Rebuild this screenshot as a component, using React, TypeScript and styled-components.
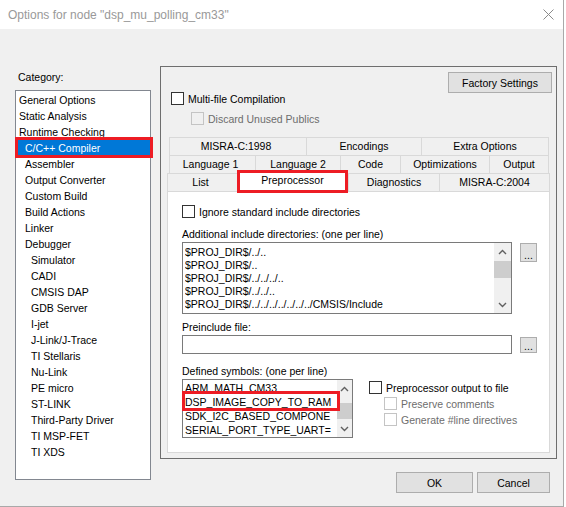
// Options dialog (IAR style)

// ___________________________________________________________________

import * as React from 'react'
import styled, { createGlobalStyle, css } from 'styled-components'

// ___________________________________________________________________

const colors = {
  face: '#f0f0f0',
  white: '#ffffff',
  text: '#000000',
  gray: '#6d6d6d',
  title: '#999999',
  frame: '#6e6e6e',
  edit: '#7a7a7a',
  list: '#828790',
  tab: '#d9d9d9',
  button: '#e1e1e1',
  buttonBorder: '#adadad',
  select: '#0078d7',
  mark: '#ed1c24',
  thumb: '#cdcdcd',
  arrow: '#606060'
}

const GlobalStyle = createGlobalStyle`
  html, body {
    margin: 0;
    padding: 0;
    background: ${colors.white};
  }
  body {
    font-family: 'Liberation Sans', Arial, sans-serif;
    font-size: 10.5px;
    color: ${colors.text};
  }
  * {
    box-sizing: border-box;
  }
`

// ___________________________________________________________________

type Category = { label: string; level: number; selected?: boolean }

const categories: Category[] = [
  { label: 'General Options', level: 0 },
  { label: 'Static Analysis', level: 0 },
  { label: 'Runtime Checking', level: 0 },
  { label: 'C/C++ Compiler', level: 1, selected: true },
  { label: 'Assembler', level: 1 },
  { label: 'Output Converter', level: 1 },
  { label: 'Custom Build', level: 1 },
  { label: 'Build Actions', level: 1 },
  { label: 'Linker', level: 1 },
  { label: 'Debugger', level: 1 },
  { label: 'Simulator', level: 2 },
  { label: 'CADI', level: 2 },
  { label: 'CMSIS DAP', level: 2 },
  { label: 'GDB Server', level: 2 },
  { label: 'I-jet', level: 2 },
  { label: 'J-Link/J-Trace', level: 2 },
  { label: 'TI Stellaris', level: 2 },
  { label: 'Nu-Link', level: 2 },
  { label: 'PE micro', level: 2 },
  { label: 'ST-LINK', level: 2 },
  { label: 'Third-Party Driver', level: 2 },
  { label: 'TI MSP-FET', level: 2 },
  { label: 'TI XDS', level: 2 }
]

type TabDef = { label: string; width: number; selected?: boolean }

const tabRows: TabDef[][] = [
  [
    { label: 'MISRA-C:1998', width: 137 },
    { label: 'Encodings', width: 115 },
    { label: 'Extra Options', width: 128 }
  ],
  [
    { label: 'Language 1', width: 86 },
    { label: 'Language 2', width: 85 },
    { label: 'Code', width: 60 },
    { label: 'Optimizations', width: 89 },
    { label: 'Output', width: 60 }
  ],
  [
    { label: 'List', width: 70 },
    { label: 'Preprocessor', width: 111, selected: true },
    { label: 'Diagnostics', width: 91 },
    { label: 'MISRA-C:2004', width: 111 }
  ]
]

const includeDirs = [
  '$PROJ_DIR$/../..',
  '$PROJ_DIR$/..',
  '$PROJ_DIR$/../../../..',
  '$PROJ_DIR$/../../..',
  '$PROJ_DIR$/../../../../../../../CMSIS/Include'
]

// the list is narrow, only the visible part of each symbol is shown
const symbols = [
  'ARM_MATH_CM33',
  'DSP_IMAGE_COPY_TO_RAM',
  'SDK_I2C_BASED_COMPONE',
  'SERIAL_PORT_TYPE_UART='
]

// ___________________________________________________________________

const Chevron: React.FC<{ up?: boolean }> = ({ up }) => (
  <svg width="9" height="6" viewBox="0 0 9 6">
    <path
      d={up ? 'M1 5 L4.5 1.5 L8 5' : 'M1 1 L4.5 4.5 L8 1'}
      fill="none"
      stroke={colors.arrow}
      strokeWidth="1.4"
    />
  </svg>
)

const ScrollBar: React.FC<{ width: number; thumbTop: number; thumbHeight: number }> = ({
  width,
  thumbTop,
  thumbHeight
}) => (
  <Track $width={width}>
    <ArrowCell>
      <Chevron up />
    </ArrowCell>
    <Thumb $top={thumbTop} $height={thumbHeight} />
    <Spacer />
    <ArrowCell>
      <Chevron />
    </ArrowCell>
  </Track>
)

const CheckOption: React.FC<{
  label: string
  disabled?: boolean
  indent?: number
  top?: number
}> = ({ label, disabled, indent = 0, top = 0 }) => (
  <CheckRow $indent={indent} $top={top} $disabled={disabled}>
    <Box $disabled={disabled} />
    <span>{label}</span>
  </CheckRow>
)

// ___________________________________________________________________

const App: React.FC = () => (
  <>
    <GlobalStyle />
    <Window>
      <TitleBar>
        <Title>Options for node "dsp_mu_polling_cm33"</Title>
        <svg width="11" height="11" viewBox="0 0 11 11">
          <path d="M0.5 0.5 L10.5 10.5 M10.5 0.5 L0.5 10.5" stroke="#8a8a8a" strokeWidth="1" />
        </svg>
      </TitleBar>

      <Body>
        <LeftColumn>
          <CategoryLabel>Category:</CategoryLabel>
          <CategoryList>
            {categories.map(c => (
              <CategoryItem key={c.label} $level={c.level} $selected={c.selected}>
                {c.label}
              </CategoryItem>
            ))}
          </CategoryList>
        </LeftColumn>

        <RightColumn>
          <Panel>
            <PanelHeader>
              <Button $width={104}>Factory Settings</Button>
            </PanelHeader>
            <CheckOption label="Multi-file Compilation" indent={4} top={-1} />
            <CheckOption label="Discard Unused Publics" indent={24} top={7} disabled />

            <TabControl>
              {tabRows.map((row, i) => (
                <TabRow key={i} $inset={i < 2}>
                  {row.map(t => (
                    <Tab key={t.label} $width={t.width} $selected={t.selected}>
                      {t.label}
                    </Tab>
                  ))}
                </TabRow>
              ))}

              <TabPage>
                <CheckOption label="Ignore standard include directories" />

                <FieldLabel $top={10}>Additional include directories: (one per line)</FieldLabel>
                <FieldRow>
                  <EditBox $width={330} $height={72}>
                    <Lines $lineHeight={13} $top={3}>
                      {includeDirs.map(d => (
                        <LineText key={d}>{d}</LineText>
                      ))}
                    </Lines>
                    <ScrollBar width={17} thumbTop={1} thumbHeight={17} />
                  </EditBox>
                  <BrowseButton $height={19} $top={1}>...</BrowseButton>
                </FieldRow>

                <FieldLabel $top={7}>Preinclude file:</FieldLabel>
                <FieldRow>
                  <EditBox $width={330} $height={19} />
                  <BrowseButton $height={16} $top={2}>...</BrowseButton>
                </FieldRow>

                <FieldLabel $top={11}>Defined symbols: (one per line)</FieldLabel>
                <FieldRow>
                  <EditBox $width={171} $height={59}>
                    <Lines $lineHeight={14} $top={1}>
                      {symbols.map(s => (
                        <SymbolLine key={s} $marked={s === 'DSP_IMAGE_COPY_TO_RAM'}>
                          <LineText>{s}</LineText>
                        </SymbolLine>
                      ))}
                    </Lines>
                    <ScrollBar width={15} thumbTop={6} thumbHeight={16} />
                  </EditBox>
                  <OptionGroup>
                    <CheckOption label="Preprocessor output to file" />
                    <CheckOption label="Preserve comments" indent={15} disabled />
                    <CheckOption label="Generate #line directives" indent={15} disabled />
                  </OptionGroup>
                </FieldRow>
              </TabPage>
            </TabControl>
          </Panel>

          <ButtonRow>
            <Button $width={77}>OK</Button>
            <Button $width={73}>Cancel</Button>
          </ButtonRow>
        </RightColumn>
      </Body>
    </Window>
  </>
)

export default App

// ___________________________________________________________________

const markBox = css`
  content: '';
  position: absolute;
  border: 3px solid ${colors.mark};
  pointer-events: none;
`

const Window = styled.div`
  display: flex;
  flex-direction: column;
  width: 564px;
  height: 507px;
  background: ${colors.face};
  border-right: 1px solid #a9a9a9;
  border-bottom: 1px solid #a9a9a9;
`

const TitleBar = styled.div`
  display: flex;
  align-items: center;
  justify-content: space-between;
  height: 29px;
  padding: 0 9px 0 8px;
  background: ${colors.white};
`

const Title = styled.span`
  font-size: 12px;
  color: ${colors.title};
`

const Body = styled.div`
  display: flex;
  flex: 1;
  gap: 9px;
  padding: 37px 0 0 15px;
`

const LeftColumn = styled.div`
  display: flex;
  flex-direction: column;
  width: 136px;
`

const CategoryLabel = styled.div`
  line-height: 13px;
  margin: 5px 0 6px 3px;
`

const CategoryList = styled.div`
  height: 390px;
  padding-top: 1px;
  background: ${colors.white};
  border: 1px solid ${colors.list};
`

const CategoryItem = styled.div<{ $level: number; $selected?: boolean }>`
  position: relative;
  height: 16px;
  line-height: 16px;
  padding-left: ${p => 3 + p.$level * 6}px;
  white-space: nowrap;

  ${p =>
    p.$selected &&
    css`
      background: ${colors.select};
      color: ${colors.white};

      &::after {
        ${markBox};
        top: -3px;
        left: -1px;
        right: -3px;
        bottom: -2px;
      }
    `}
`

const RightColumn = styled.div`
  display: flex;
  flex-direction: column;
  width: 397px;
`

const Panel = styled.div`
  display: flex;
  flex-direction: column;
  padding: 5px 4px 5px 6px;
  border: 1px solid ${colors.frame};
`

const PanelHeader = styled.div`
  display: flex;
  justify-content: flex-end;
`

const Button = styled.div<{ $width: number }>`
  display: flex;
  align-items: center;
  justify-content: center;
  width: ${p => p.$width}px;
  height: 21px;
  background: ${colors.button};
  border: 1px solid ${colors.buttonBorder};
`

const CheckRow = styled.div<{ $indent: number; $top: number; $disabled?: boolean }>`
  display: flex;
  align-items: center;
  gap: 4px;
  height: 13px;
  margin-left: ${p => p.$indent}px;
  margin-top: ${p => p.$top}px;
  color: ${p => (p.$disabled ? colors.gray : colors.text)};
  white-space: nowrap;
`

const Box = styled.span<{ $disabled?: boolean }>`
  flex: none;
  width: 13px;
  height: 13px;
  background: ${p => (p.$disabled ? 'transparent' : colors.white)};
  border: 1px solid ${p => (p.$disabled ? '#c4c4c4' : '#333333')};
`

const TabControl = styled.div`
  display: flex;
  flex-direction: column;
  margin: 12px 2px 0 0;
`

const TabRow = styled.div<{ $inset: boolean }>`
  display: flex;
  align-items: flex-start;
  height: 18px;
  margin: ${p => (p.$inset ? '0 1px 0 2px' : '0')};
`

const Tab = styled.div<{ $width: number; $selected?: boolean }>`
  flex: none;
  width: ${p => p.$width}px;
  height: 18px;
  line-height: 17px;
  text-align: center;
  white-space: nowrap;
  background: ${colors.face};
  border-top: 1px solid ${colors.tab};
  border-left: 1px solid ${colors.tab};

  &:first-child {
    padding-right: 4px;
  }

  &:last-child {
    border-right: 1px solid ${colors.tab};
  }

  ${p =>
    p.$selected &&
    css`
      position: relative;
      z-index: 1;
      height: 23px;
      margin: -3px 0 -2px;
      line-height: 15px;
      background: ${colors.white};
      border: 3px solid ${colors.mark};
    `}
`

const TabPage = styled.div`
  display: flex;
  flex-direction: column;
  height: 262px;
  padding: 13px 0 0 14px;
  background: ${colors.white};
  border: 1px solid ${colors.tab};
`

const FieldLabel = styled.div<{ $top: number }>`
  line-height: 13px;
  margin: ${p => p.$top}px 0 1px;
  white-space: nowrap;
`

const FieldRow = styled.div`
  display: flex;
  align-items: flex-start;
`

const EditBox = styled.div<{ $width: number; $height: number }>`
  display: flex;
  width: ${p => p.$width}px;
  height: ${p => p.$height}px;
  background: ${colors.white};
  border: 1px solid ${colors.edit};
`

const Lines = styled.div<{ $lineHeight: number; $top: number }>`
  flex: 1;
  min-width: 0;
  padding: ${p => p.$top}px 0 0 2px;
  line-height: ${p => p.$lineHeight}px;
`

const LineText = styled.div`
  overflow: hidden;
  white-space: nowrap;
`

const SymbolLine = styled.div<{ $marked?: boolean }>`
  position: relative;

  ${p =>
    p.$marked &&
    css`
      z-index: 2;

      &::after {
        ${markBox};
        top: -4px;
        left: -3px;
        right: -3px;
        bottom: -2px;
      }
    `}
`

const Track = styled.div<{ $width: number }>`
  display: flex;
  flex-direction: column;
  flex: none;
  width: ${p => p.$width}px;
  background: ${colors.face};
`

const ArrowCell = styled.div`
  display: flex;
  align-items: center;
  justify-content: center;
  height: 17px;
`

const Thumb = styled.div<{ $top: number; $height: number }>`
  height: ${p => p.$height}px;
  margin-top: ${p => p.$top}px;
  background: ${colors.thumb};
`

const Spacer = styled.div`
  flex: 1;
`

const BrowseButton = styled.div<{ $height: number; $top: number }>`
  display: flex;
  align-items: flex-end;
  justify-content: center;
  width: 17px;
  height: ${p => p.$height}px;
  margin: ${p => p.$top}px 0 0 8px;
  padding-bottom: 1px;
  line-height: 10px;
  background: ${colors.button};
  border: 1px solid ${colors.buttonBorder};
`

const OptionGroup = styled.div`
  display: flex;
  flex-direction: column;
  gap: 3px;
  margin-left: 16px;
  padding-top: 2px;
`

const ButtonRow = styled.div`
  display: flex;
  justify-content: flex-end;
  gap: 4px;
  margin-top: 13px;
  padding-right: 7px;
`
